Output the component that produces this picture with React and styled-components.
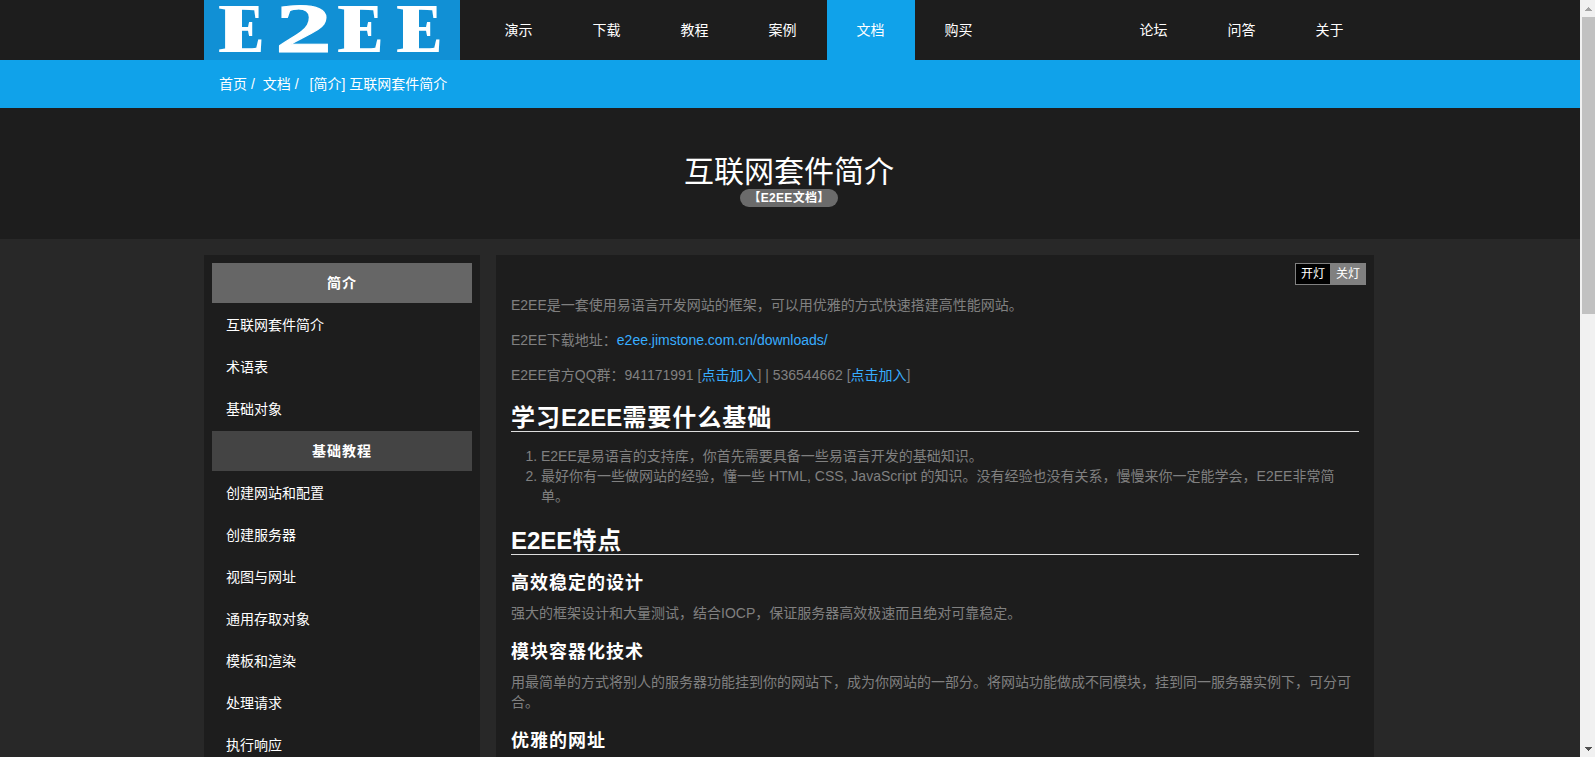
import React from "react"
import styled, { createGlobalStyle } from "styled-components"

const GlobalStyle = createGlobalStyle`
  html, body {
    margin: 0;
    height: 100%;
    overflow: hidden;
  }
  body {
    background: #282828;
    font-family: "Liberation Sans", "Noto Sans CJK SC", sans-serif;
    font-size: 14px;
    line-height: 20px;
    color: #808080;
  }
`

const Shell = styled.div`
  display: flex;
  height: 757px;
`

const Page = styled.div`
  flex: 1;
  min-width: 0;
  overflow: hidden;
`

const Scrollbar = styled.div`
  width: 15px;
  display: flex;
  flex-direction: column;
  background: #f1f1f1;
`

const ScrollThumb = styled.div`
  height: 297px;
  margin-left: 2px;
  background: #c1c1c1;
`

const ScrollButton = styled.div`
  height: 17px;
  margin-top: ${({ end }) => (end ? "auto" : "0")};
  display: flex;
  align-items: center;
  justify-content: center;
  padding-left: 2px;
`

const Container = styled.div`
  width: 1170px;
  margin-left: 204px;
`

const TopBar = styled.div`
  height: 60px;
  background: #1d1d1d;
`

const TopInner = styled(Container)`
  display: flex;
  height: 60px;
`

const LogoBox = styled.a`
  display: block;
  width: 256px;
  height: 60px;
  margin-right: 15px;
  background: #1190d5;
`

const LogoSvg = styled.svg`
  display: block;
  overflow: visible;
`

const NavLink = styled.a`
  display: block;
  box-sizing: border-box;
  width: 88px;
  padding-right: 1px;
  line-height: 60px;
  text-align: center;
  color: #fff;
  background: ${({ active }) => (active ? "#10a2ea" : "transparent")};
`

const NavRight = styled.div`
  display: flex;
  margin-left: auto;
`

const CrumbBar = styled.div`
  height: 48px;
  background: #10a2ea;
`

const CrumbInner = styled(Container)`
  display: flex;
  padding-left: 15px;
  line-height: 48px;
  color: #fff;
`

const Crumb = styled.span`
  margin-right: 8px;
`

const CrumbCurrent = styled.span`
  margin-left: 3px;
`

const Hero = styled.div`
  height: 131px;
  padding: 47px 2px 0 0;
  box-sizing: border-box;
  background: #1d1d1d;
  text-align: center;
  color: #fff;
`

const HeroTitle = styled.h1`
  margin: 0;
  font-size: 30px;
  font-weight: 400;
  line-height: 34px;
`

const Badge = styled.span`
  display: inline-block;
  height: 18px;
  padding: 0 8px;
  border-radius: 9px;
  background: #6b6b6b;
  font-size: 12px;
  font-weight: 700;
  letter-spacing: 0.3px;
  line-height: 18px;
  vertical-align: top;
`

const Columns = styled(Container)`
  display: flex;
  gap: 16px;
  margin-top: 16px;
`

const Sidebar = styled.div`
  width: 260px;
  flex: none;
  padding: 8px;
  background: #1d1d1d;
`

const MenuHead = styled.div`
  height: 40px;
  margin-top: ${({ first }) => (first ? "0" : "2px")};
  background: ${({ first }) => (first ? "#666" : "#444")};
  color: #fff;
  font-weight: 700;
  letter-spacing: 1px;
  line-height: 40px;
  text-align: center;
`

const MenuItem = styled.a`
  display: block;
  height: 42px;
  padding-left: 14px;
  color: #fff;
  line-height: 44px;
`

const Main = styled.div`
  flex: 1;
  min-width: 0;
  padding: 8px 15px;
  background: #1d1d1d;
`

const LightSwitch = styled.div`
  display: flex;
  justify-content: flex-end;
  margin: 0 -7px 10px 0;
  height: 22px;
`

const LightButton = styled.span`
  width: 34px;
  height: 20px;
  border: 1px solid #808080;
  border-left-width: ${({ on }) => (on ? "1px" : "0")};
  background: ${({ on }) => (on ? "#000" : "#808080")};
  color: #fff;
  font-size: 12px;
  line-height: 20px;
  text-align: center;
`

const Para = styled.p`
  margin: 0 0 15px;
`

const Link = styled.a`
  color: #38adff;
`

const SectionTitle = styled.h2`
  margin: 0 0 14px;
  padding-top: 4px;
  border-bottom: 1px solid #ddd;
  color: #fff;
  font-size: 24px;
  letter-spacing: 1px;
  line-height: 27px;
  font-weight: 700;
`

const Latin = styled.span`
  letter-spacing: 0;
`

const Steps = styled.ol`
  margin: 0 0 17px;
  padding-left: 30px;
`

const SubTitle = styled.h3`
  margin: 0 0 10px;
  padding-top: 4px;
  color: #fff;
  font-size: 18px;
  letter-spacing: 1px;
  line-height: 20px;
  font-weight: 700;
`

const introMenu = ["互联网套件简介", "术语表", "基础对象"]
const basicMenu = [
  "创建网站和配置",
  "创建服务器",
  "视图与网址",
  "通用存取对象",
  "模板和渲染",
  "处理请求",
  "执行响应",
]

const Logo = () => (
  <LogoSvg width="256" height="60" viewBox="0 0 256 60">
    <g fill="#fff" fontFamily="Liberation Serif" fontWeight="700" fontSize="70">
      <rect x="22" y="7" width="16" height="44" />
      <rect x="141" y="7" width="15" height="44" />
      <rect x="199" y="7" width="16" height="44" />
      <text x="14" y="52" textLength="47" lengthAdjust="spacingAndGlyphs">E</text>
      <text x="71" y="52" textLength="57" lengthAdjust="spacingAndGlyphs" stroke="#fff">2</text>
      <text x="133" y="52" textLength="47" lengthAdjust="spacingAndGlyphs">E</text>
      <text x="192" y="52" textLength="47" lengthAdjust="spacingAndGlyphs">E</text>
    </g>
  </LogoSvg>
)

export default function App() {
  return (
    <Shell>
      <GlobalStyle />
      <Page>
        <TopBar>
          <TopInner>
            <LogoBox>
              <Logo />
            </LogoBox>
            <NavLink>演示</NavLink>
            <NavLink>下载</NavLink>
            <NavLink>教程</NavLink>
            <NavLink>案例</NavLink>
            <NavLink active>文档</NavLink>
            <NavLink>购买</NavLink>
            <NavRight>
              <NavLink>论坛</NavLink>
              <NavLink>问答</NavLink>
              <NavLink>关于</NavLink>
            </NavRight>
          </TopInner>
        </TopBar>
        <CrumbBar>
          <CrumbInner>
            <Crumb>首页 /</Crumb>
            <Crumb>文档 /</Crumb>
            <CrumbCurrent>[简介] 互联网套件简介</CrumbCurrent>
          </CrumbInner>
        </CrumbBar>
        <Hero>
          <HeroTitle>互联网套件简介</HeroTitle>
          <Badge>【E2EE文档】</Badge>
        </Hero>
        <Columns>
          <Sidebar>
            <MenuHead first>简介</MenuHead>
            {introMenu.map(item => (
              <MenuItem key={item}>{item}</MenuItem>
            ))}
            <MenuHead>基础教程</MenuHead>
            {basicMenu.map(item => (
              <MenuItem key={item}>{item}</MenuItem>
            ))}
          </Sidebar>
          <Main>
            <LightSwitch>
              <LightButton on>开灯</LightButton>
              <LightButton>关灯</LightButton>
            </LightSwitch>
            <Para>E2EE是一套使用易语言开发网站的框架，可以用优雅的方式快速搭建高性能网站。</Para>
            <Para>
              E2EE下载地址：<Link>e2ee.jimstone.com.cn/downloads/</Link>
            </Para>
            <Para>
              E2EE官方QQ群：941171991 [<Link>点击加入</Link>] | 536544662 [<Link>点击加入</Link>]
            </Para>
            <SectionTitle>
              学习<Latin>E2EE</Latin>需要什么基础
            </SectionTitle>
            <Steps>
              <li>E2EE是易语言的支持库，你首先需要具备一些易语言开发的基础知识。</li>
              <li>最好你有一些做网站的经验，懂一些 HTML, CSS, JavaScript 的知识。没有经验也没有关系，慢慢来你一定能学会，E2EE非常简单。</li>
            </Steps>
            <SectionTitle>
              <Latin>E2EE</Latin>特点
            </SectionTitle>
            <SubTitle>高效稳定的设计</SubTitle>
            <Para>强大的框架设计和大量测试，结合IOCP，保证服务器高效极速而且绝对可靠稳定。</Para>
            <SubTitle>模块容器化技术</SubTitle>
            <Para>用最简单的方式将别人的服务器功能挂到你的网站下，成为你网站的一部分。将网站功能做成不同模块，挂到同一服务器实例下，可分可合。</Para>
            <SubTitle>优雅的网址</SubTitle>
          </Main>
        </Columns>
      </Page>
      <Scrollbar>
        <ScrollButton>
          <svg width="7" height="4" viewBox="0 0 7 4" shapeRendering="crispEdges">
            <path d="M3 0h1v1h1v1h1v1h1v1H0V3h1V2h1V1h1z" fill="#a3a3a3" />
          </svg>
        </ScrollButton>
        <ScrollThumb />
        <ScrollButton end>
          <svg width="7" height="4" viewBox="0 0 7 4" shapeRendering="crispEdges">
            <path d="M0 0h7v1H6v1H5v1H4v1H3V3H2V2H1V1H0z" fill="#505050" />
          </svg>
        </ScrollButton>
      </Scrollbar>
    </Shell>
  )
}
